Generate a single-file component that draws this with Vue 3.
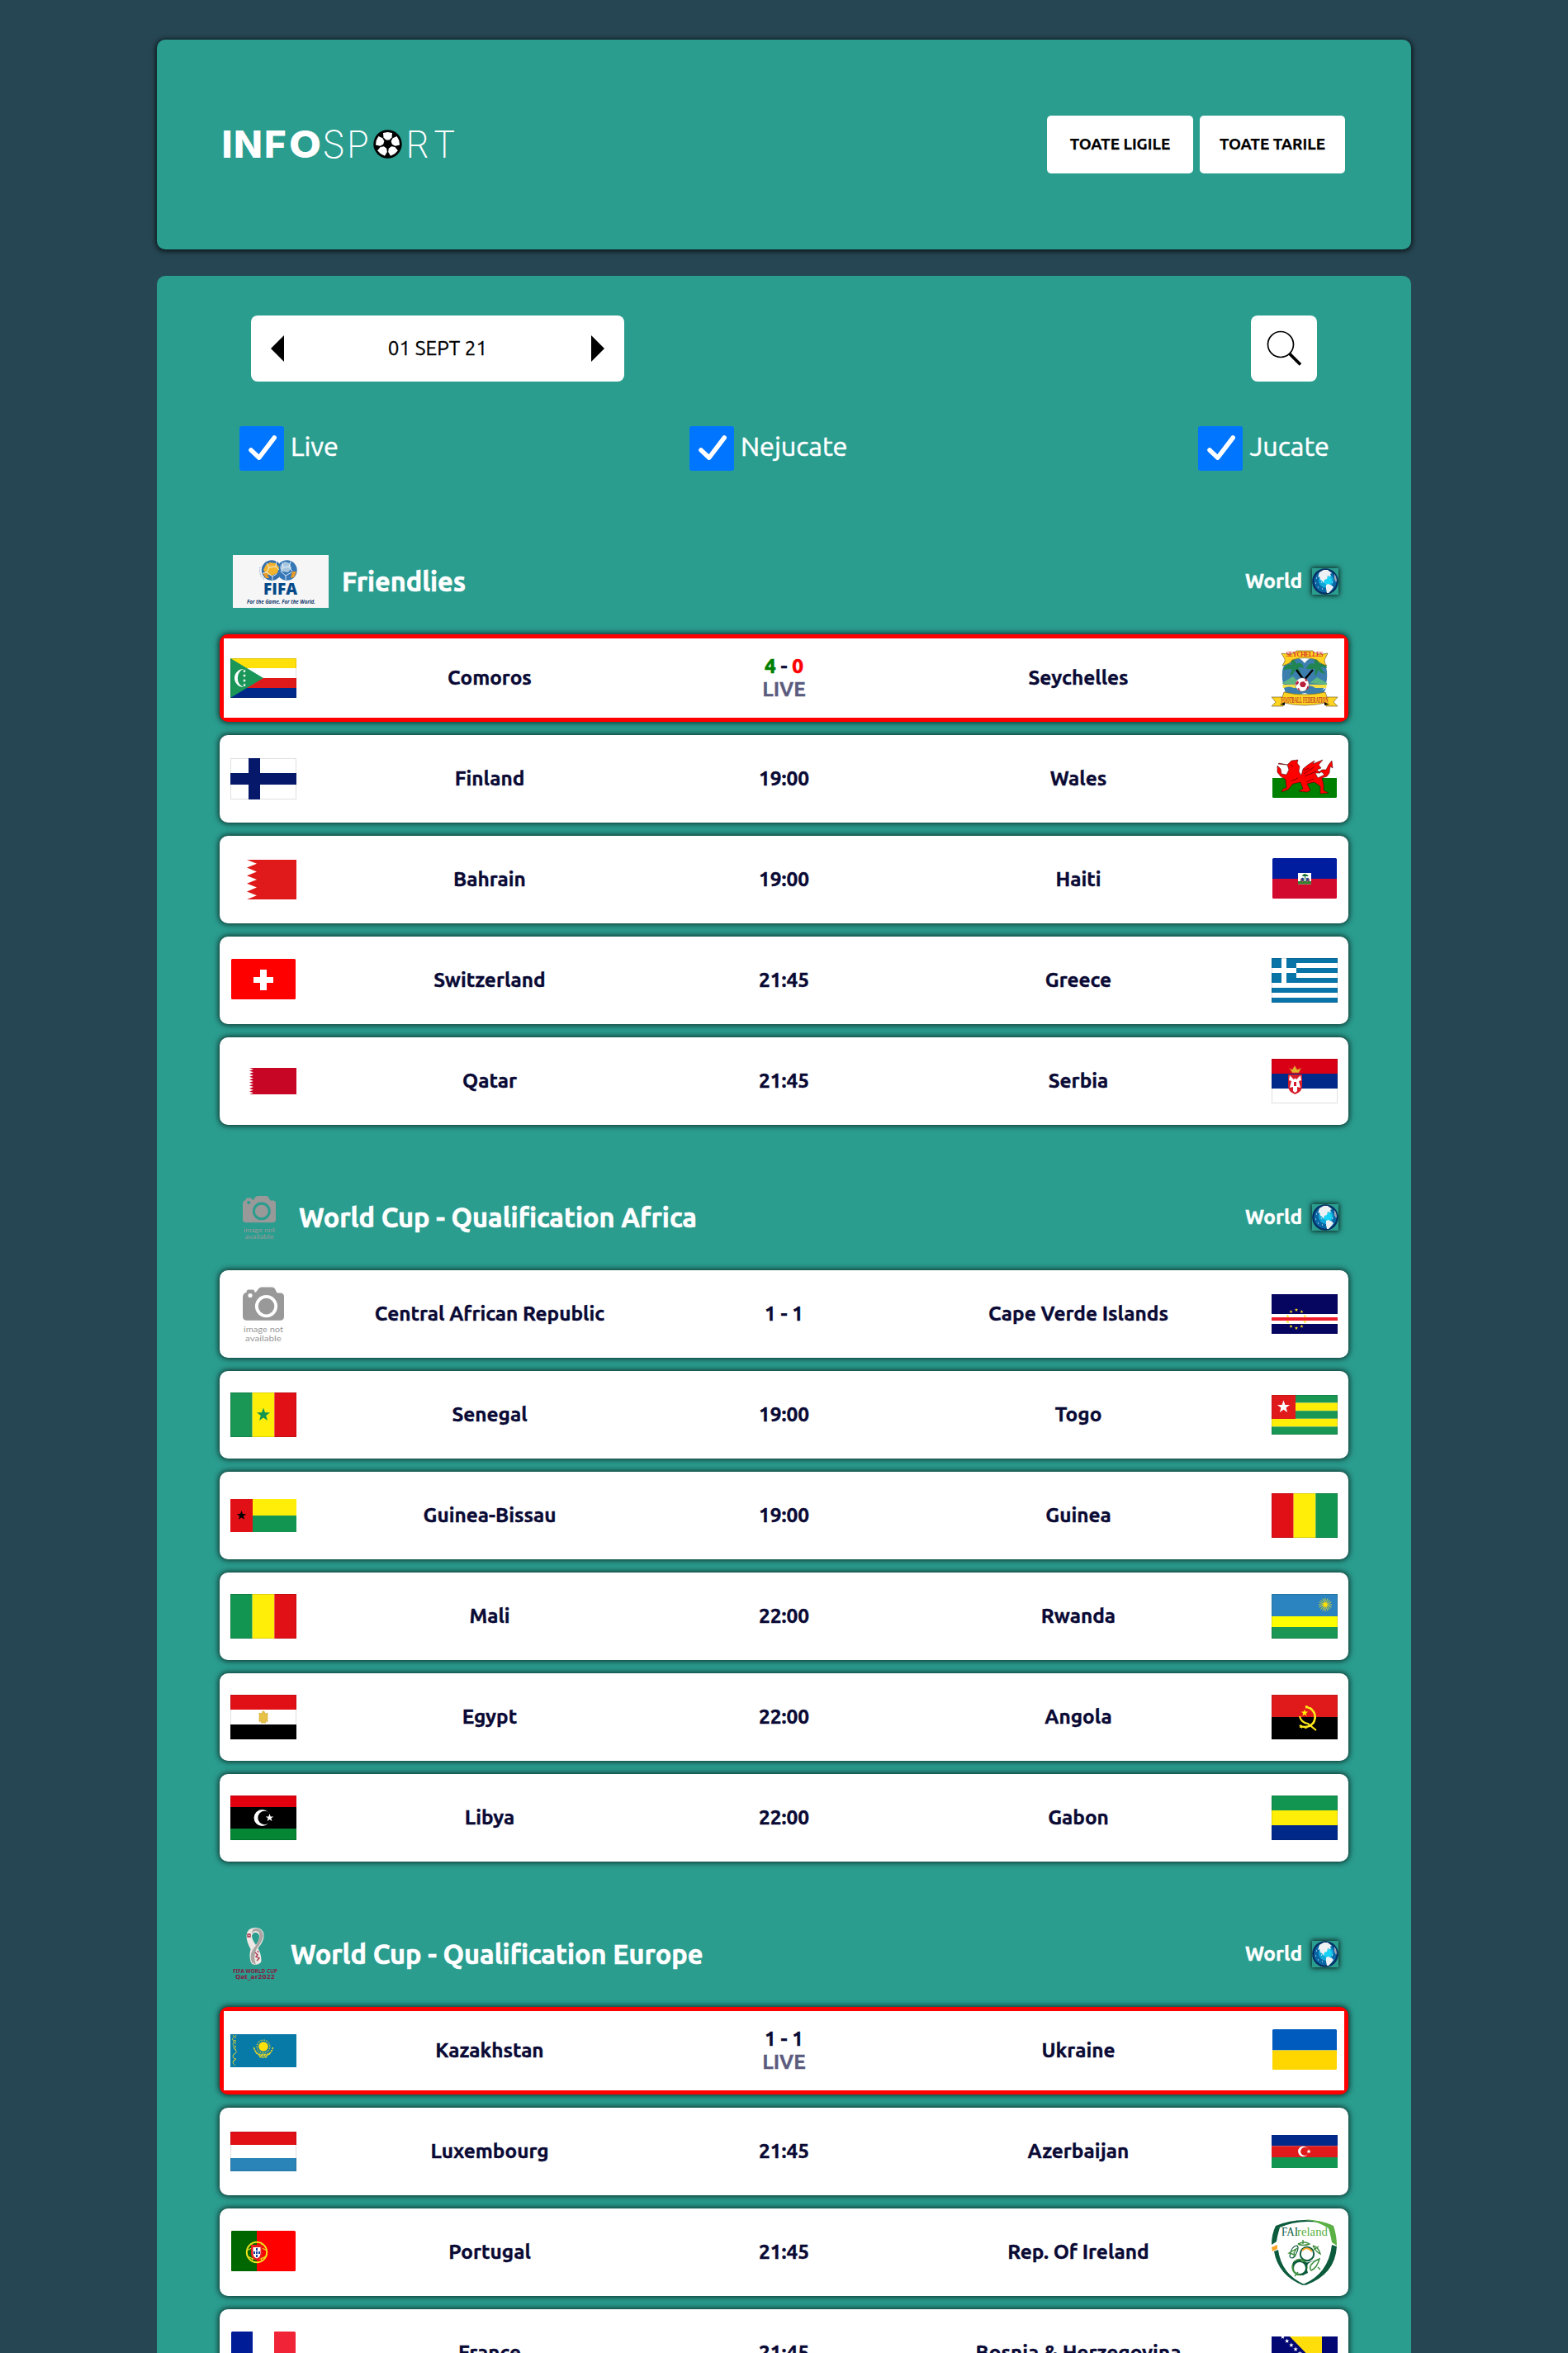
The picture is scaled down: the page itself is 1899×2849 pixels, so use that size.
<script setup>
const star = (cx, cy, r, fill, sy = 1) => {
  const pts = []
  for (let i = 0; i < 10; i++) {
    const q = i % 2 ? r * 0.4 : r
    const a = (Math.PI / 5) * i - Math.PI / 2
    pts.push(`${(cx + q * Math.cos(a)).toFixed(2)},${(cy + q * Math.sin(a) * sy).toFixed(2)}`)
  }
  return `<polygon points="${pts.join(' ')}" fill="${fill}"/>`
}
const rect = (x, y, w, h, fill) => `<rect x="${x}" y="${y}" width="${w}" height="${h}" fill="${fill}"/>`
const bars = (h, colors) => colors.map((c, i) => rect(0, (h / colors.length) * i, 80, h / colors.length, c)).join('')
const cols = (h, colors) => colors.map((c, i) => rect((80 / colors.length) * i, 0, 80 / colors.length, h, c)).join('')
const edge = (h) => `<rect x=".5" y=".5" width="79" height="${h - 1}" fill="none" stroke="#000" stroke-opacity=".12"/>`
const around = (n, f) => Array.from({ length: n }, (_, i) => f((Math.PI * 2 * i) / n, i)).join('')
const f = (h, body) => ({ h, body })

const R = '#e01016', G = '#129550', Y = '#ffef08'

const camera = `<g><path d="M19.500 14q0-3.500 2.500-3.500h5q2 0 2.500 3h1.500l3-4q1.500-2 3.500-2h13q2.500 0 3.500 2l2.500 5h4q4.500 0 4.500 4.500v24q0 4.700-4.500 4.700h-40.500q-5 0-5-4.700v-23q0-5 4-6z" fill="#999"/><circle cx="24" cy="17.500" r="2.600" fill="var(--hole)"/><circle cx="43.500" cy="30.600" r="13.600" fill="var(--hole)"/><circle cx="43.500" cy="30.600" r="9.800" fill="#999"/><g font-size="9" font-weight="400" text-anchor="middle" fill="#999" font-family="Lato,sans-serif"><text x="40" y="62" textLength="48" lengthAdjust="spacingAndGlyphs">image not</text><text x="40" y="73" textLength="44" lengthAdjust="spacingAndGlyphs">available</text></g></g>`

const flags = {
  comoros: f(48, bars(48, ['#ffe00a', '#fff', '#e01a1a', '#00298a']) + '<path d="M0 0L40 24 0 48z" fill="#1a9659"/><path d="M16 13a11 11 0 1 0 0 22a12 12 0 0 1 0-22z" fill="#fff"/>' + [15.5, 21, 27, 32.500].map((y) => star(17, y, 2.200, '#fff')).join('') + edge(48)),
  finland: f(50, rect(0, 0, 80, 50, '#fff') + edge(50) + rect(0, 18, 80, 14, '#05186a') + rect(22, 0, 14, 50, '#05186a')),
  bahrain: f(48, '<path d="M80 0H20L32 4.800 20 9.600 32 14.400 20 19.200 32 24 20 28.800 32 33.600 20 38.400 32 43.200 20 48H80z" fill="#e01a1a"/>'),
  switzerland: f(52, '<rect x="1" width="78" height="49" rx="1.500" fill="#f00"/><path d="M36 13h8v9h8v7h-8v9h-8v-9h-8v-7h8z" fill="#fff"/>'),
  qatar: f(32, '<path d="M80 0H23' + Array.from({ length: 9 }, (_, i) => `L28 ${(i * 3.556 + 1.780).toFixed(2)} 23 ${((i + 1) * 3.556).toFixed(2)}`).join('') + 'H80z" fill="#c70525"/>'),
  wales: f(52, '<path d="M1 25h78v22.500q0 1.500-1.500 1.500h-75q-1.500 0-1.500-1.500z" fill="#008000"/><path d="M8 8l11 1 5-5 8-1-1 4 3 4-1 6 3 5 2-8 6-5 8-5-2 4 12-5-5 6 3 4-5 2 4 4-6 0 3 6 8-4-3-3-4 0 4-3 5 0 3-6 4-5 1 9-3-2-1 8-3 4-6 2 2 8 0 7 6 3-10 1 0-9-7-5-9 2 4 8-4 2-10-1 5-3-3-8-9 2-6 7-8 3 2-4 4-1-1-10-6-4-4-5 0-8 4 4 1 6 6 1 3-6-2-6-10-2z" fill="#f00" stroke="#300" stroke-width=".5"/><path d="M39 16l6-3M39 20l12-8M40 23l14-6M23 9l3 2M24 29l8-4M42 30l9-4" stroke="#600" stroke-width=".8"/>'),
  haiti: f(52, '<path d="M1 1.500q0-1.500 1.500-1.500h75q1.500 0 1.500 1.500V25H1z" fill="#001c9f"/><path d="M1 25h78v22.500q0 1.500-1.500 1.500h-75q-1.500 0-1.500-1.500z" fill="#d20a2e"/>' + rect(32, 18, 16, 13.500, '#fff') + rect(32, 28, 16, 3.500, '#35802e') + '<path d="M38 20l2-1 3 1 2 2-4 0v7h-1v-7l-3 0z" fill="#196b33"/><path d="M35 28q0-5 4-4v4zM46 28q0-5-4-4v4z" fill="#26418f"/><path d="M35 25l3 4M46 25l-3 4" stroke="#d4622c"/>'),
  greece: f(54, bars(54, ['#0874a8', '#fff', '#0874a8', '#fff', '#0874a8', '#fff', '#0874a8', '#fff', '#0874a8']) + rect(0, 0, 30, 30, '#0874a8') + rect(12, 0, 6, 30, '#fff') + rect(0, 12, 30, 6, '#fff') + edge(54)),
  serbia: f(54, bars(54, ['#d90016', '#00298a', '#fff']) + edge(54) + '<path d="M20 19h17v14q0 7-8.500 10Q20 40 20 33z" fill="#d61e2b"/><path d="M27 25l-5-5-1 6 3 1-2 8 4-1 0 5 2.500 2 2.500-2 0-5 4 1-2-8 3-1-1-6-5 5q-1.500-3-3 0z" fill="#fff"/><path d="M27 28h3v5h-3z" fill="#d61e2b"/><path d="M21 11l4 2 3-5 3 5 5-2-3 6h-8z" fill="#e2b429" stroke="#d61e2b" stroke-width=".6"/>'),
  camera: f(80, camera),
  senegal: f(54, cols(54, ['#1a9655', Y, R]) + star(40, 27, 8.500, G) + edge(54)),
  bissau: f(40, rect(0, 0, 80, 20, Y) + rect(0, 20, 80, 20, G) + rect(0, 0, 27, 40, R) + star(13.500, 20, 6, '#000')),
  mali: f(54, cols(54, [G, Y, R]) + edge(54)),
  egypt: f(54, bars(54, [R, '#fff', '#000']) + edge(54) + '<path d="M39 20h2l1 3 3-1v11l-3-2 1 3h-6l1-3-3 2V22l3 1z" fill="#e8c248" stroke="#c89a18" stroke-width=".5"/>'),
  libya: f(54, rect(0, 0, 80, 14, '#e2000f') + rect(0, 14, 80, 26, '#000') + rect(0, 40, 80, 14, '#048634') + '<circle cx="38.500" cy="27" r="10" fill="#fff"/><circle cx="41.500" cy="27" r="8.200" fill="#000"/>' + star(47.500, 27, 5, '#fff') + edge(54)),
  verde: f(48, rect(0, 0, 80, 48, '#060660') + rect(0, 24, 80, 12, '#fff') + rect(0, 28, 80, 4, '#ee1c2a') + around(10, (a) => star(30 + 11 * Math.sin(a), 30 - 11 * Math.cos(a), 2.200, '#ffdf1c'))),
  togo: f(48, bars(48, ['#1a9655', Y, '#1a9655', Y, '#1a9655']) + rect(0, 0, 29, 29, '#e01a1a') + star(14.500, 14.500, 8, '#fff') + edge(48)),
  guinea: f(54, cols(54, [R, Y, G]) + edge(54)),
  rwanda: f(54, rect(0, 0, 80, 27, '#2b84bf') + rect(0, 27, 80, 13, '#ff0') + rect(0, 40, 80, 14, '#1a9655') + around(16, (a) => `<path d="M65 13L${(65 + 8 * Math.cos(a)).toFixed(1)} ${(13 + 8 * Math.sin(a)).toFixed(1)}" stroke="#f1dc1c" stroke-width=".9"/>`) + '<circle cx="65" cy="13" r="3.200" fill="#ffe000" stroke="#2b84bf" stroke-width=".5"/>' + edge(54)),
  angola: f(54, rect(0, 0, 80, 27, '#e01a1a') + rect(0, 27, 80, 27, '#000') + star(40, 22, 4.500, Y) + '<path d="M41 15a12 12 0 1 1-7 22" fill="none" stroke="#ffe81c" stroke-width="2.600"/><path d="M41 14a13 13 0 1 1-8 24" fill="none" stroke="#ffe81c" stroke-width="2" stroke-dasharray="3 3"/><path d="M34 26q2 8 10 9l10 8" fill="none" stroke="#ffe81c" stroke-width="2.200"/>' + edge(54)),
  gabon: f(54, bars(54, [G, Y, '#00298a']) + edge(54)),
  kazakhstan: f(40, rect(0, 0, 80, 40, '#087aa8') + '<path d="M3 1q3 2 0 4t4 3q-4 2-4 4t4 3q-4 1-1 4t0 4q-3 1-3 4t4 3q-4 2-4 4t3 4M7 1q-3 2 0 4M3 8l4 4M3 15l4 4M7 22l-4 4M7 30l-4 4" fill="none" stroke="#d5cc38" stroke-width=".9"/><circle cx="40" cy="15" r="5.800" fill="#ffe00a"/><circle cx="40" cy="15" r="7.800" fill="none" stroke="#e8d723" stroke-width="1.400" stroke-dasharray="1 1.200"/><path d="M28.500 16q2 8 8 8.500h7q6-.5 8-8.500M31 22q4 5 9 3.500 5 1.500 9-3.500M35 27q5 2 10 0" fill="none" stroke="#e8d723" stroke-width="1.600" stroke-dasharray="2.500 .8"/>'),
  luxembourg: f(48, bars(48, [R, '#fff', '#2b84b8']) + edge(48)),
  portugal: f(52, '<rect x="1" width="78" height="49" rx="1.500" fill="#f00"/><path d="M32 0H2.500Q1 0 1 1.500v46Q1 49 2.500 49H32z" fill="#060"/><circle cx="32" cy="26" r="12.200" fill="none" stroke="#f1e51c" stroke-width="2"/><path d="M20 24q12-8 24 0M20 30q12 9 24 0M25 15l14 22M39 15L25 37" fill="none" stroke="#e7dc1c" stroke-width="1.200"/><path d="M25 17h14v10q0 7-7 9-7-2-7-9z" fill="#e51c1c"/><path d="M27.500 20h9v7q0 5-4.500 6.500-4.500-1.500-4.500-6.500z" fill="#fff"/><path d="M31 21h2v3h-2zM31 25h2v3h-2zM31 29h2v3h-2zM28 25h2v3h-2zM34 25h2v3h-2z" fill="#1440a0"/>'),
  france: f(52, '<path d="M27 0H2.500Q1 0 1 1.500v46Q1 49 2.500 49H27z" fill="#001c96"/><path d="M53 0h24.500q1.500 0 1.500 1.500v46q0 1.500-1.500 1.500H53z" fill="#f02436"/>'),
  ukraine: f(52, '<path d="M1 1.500q0-1.500 1.500-1.500h75q1.500 0 1.500 1.500V25.500H1z" fill="#005bbf"/><path d="M1 25.500h78v22q0 1.500-1.500 1.500h-75q-1.500 0-1.500-1.500z" fill="#ffd600"/>'),
  azerbaijan: f(40, rect(0, 0, 80, 13.300, '#00298a') + rect(0, 13.300, 80, 13.700, '#e01a1a') + rect(0, 27, 80, 13, G) + '<circle cx="38.300" cy="20" r="6.200" fill="#fff"/><circle cx="40.200" cy="20" r="5" fill="#e01a1a"/>' + star(45, 20, 2.900, '#fff')),
  bosnia: f(40, rect(0, 0, 80, 40, '#030774') + '<path d="M22 0H61V40z" fill="#ffde0a"/>' + around(8, (a, i) => star(13.500 + i * 5.200, 0.500 + i * 5, 2.900, '#fff'))),
  seychelles: f(68, '<path d="M15 12q6 0 10-4 15-3 30 0 4 4 10 4v28q-1 15-25 19Q16 55 14 40z" fill="#fff"/><path d="M40 16q-6-8-14-6-12 4-13 16-2 22 13 27l14 4 14-4q15-5 13-27-1-12-13-16-8-2-14 6z" fill="#3c7fae"/><path d="M13 40l13-8 9 9H13zM46 40l9-7 12 7v2z" fill="#5db584"/><path d="M13 42q10-1 54 0l-1 4H14z" fill="#f2df43"/><path d="M15 46q6-3 12 0t13-1 13 1 13 0l-3 6-13 6-10-6-10 6-13-6z" fill="#3c7fae"/><path d="M34 55q6-6 12 0l-3 1q-3 2-6 0z" fill="#eef8fc"/><path d="M14 24q4-9 11-6-5-7 2-6 3 2 3 5 7-4 9 5-5-2-7 0l4 6q-6-1-7-5-2 7-7 8l3-8q-7 0-11 1zM42 23q3-9 10-6-2-6 3-6t3 6q8-2 9 5-5-2-8-1l6 8q-7-1-9-6 0 7-4 8l1-8q-8 0-11 0z" fill="#218551"/><path d="M30 24l12 16M50 24L38 38" stroke="#000" stroke-width="2.500"/><path d="M12 4q14 3 18-3h20q4 6 18 3l-4 8q0 5 3 7-10-3-12-7-15-5-30 0-2 5-12 7 4-6 3-8z" fill="#ffd321" stroke="#79652a" stroke-width=".7"/><path d="M0 57h13l2-6q25 6 50 0l2 6h13l-5 6 5 5H66l-1-4q-25 6-50 0l-1 4H0l5-5z" fill="#ffd321" stroke="#79652a" stroke-width=".7"/><path d="M10 66l6-3v4zM70 66l-6-3v4z" fill="#111"/><circle cx="37" cy="42" r="8.300" fill="#fff" stroke="#555" stroke-width=".5"/><path d="M35 39l4-1 3 3-2 4h-4l-2-3zM29 40l3-3 1 3-3 3zM40 34l4 3-3 1zM44 43l1 3-4 3zM33 46l2 4-4-3z" fill="#b8203b"/><text x="40" y="8" font-size="7.500" font-weight="700" font-family="Liberation Serif,serif" text-anchor="middle" textLength="45" fill="#d8352d">SEYCHELLES</text><text x="40" y="63.500" font-size="10" font-weight="700" font-family="Liberation Serif,serif" text-anchor="middle" textLength="57" lengthAdjust="spacingAndGlyphs" fill="#c23726">FOOTBALL FEDERATION</text>'),
  ireland: f(80, '<path d="M5 8Q39-7 75 8q3 12 5 24-2 34-39 48Q3 67 0 33 0 20 5 8z" fill="#fff"/><path d="M5 8Q39-6 75 8 39-3 10 10 7 20 6 27L0 31Q0 18 5 8z" fill="#0c5b3c"/><path d="M40 0Q60 1 75 8q4 12 4 24l-6-4Q71 17 69 11 57 3 40 0z" fill="#5ab043"/><path d="M73 31l6 2Q77 67 41 80L38 79Q69 66 73 31zM3 39l5-2Q12 67 40 79l-2 1Q8 68 3 39z" fill="#0c5b3c"/><path d="M0 34l7-3v5l-6 3z" fill="#faa62b"/><g font-size="14" font-weight="400" font-family="Liberation Serif,serif"><text x="12" y="20" textLength="20" lengthAdjust="spacingAndGlyphs" fill="#0c5b3c">FAI</text><text x="31" y="20" textLength="37" lengthAdjust="spacingAndGlyphs" fill="#5ab043">reland</text></g><circle cx="43" cy="42" r="8.200" fill="#fff" stroke="#0c5b3c" stroke-width="2"/><path d="M37 38q6-6 12 1" fill="none" stroke="#faa62b" stroke-width="2"/><ellipse cx="34" cy="58" rx="8.500" ry="9" fill="#fff" stroke="#3c8f3d" stroke-width="2.500"/><path d="M26 52q-1 14 12 16l6-3q-4-10 3-13l7-3-9 3q-7 1-11-3z" fill="#0c5b3c"/><circle cx="34" cy="59" r="7" fill="#fff"/><path d="M48 62q7-3 10-14-8 3-11 9-1 3 1 5z" fill="#fff" stroke="#3c8f3d" stroke-width="1.500"/><path d="M22 45q2-13 9-13 3 3-3 13-4 4-6 0z" fill="none" stroke="#0c5b3c" stroke-width="1.200"/><path d="M21 41l9-5-3 5 2 4-4-3zM32 30q8-4 14 0-8 3-14 0M38 25v5M50 32q7 2 9 10-5-2-9-10M51 37l6-4M28 69l4-5M56 58l3 3" fill="none" stroke="#3c8f3d" stroke-width="1.400"/>'),
}

const logos = {
  fifa: { w: 116, body: '<rect width="116" height="64" fill="#f6f6f6"/><path d="M33 15q-2 10 6 15" fill="none" stroke="#5584b5" stroke-dasharray="1 1.500"/><circle cx="47" cy="18.500" r="12.200" fill="#356fac"/><circle cx="65.500" cy="18.500" r="12.200" fill="#3577b7"/><path d="M40 12l5-3 7 1 4 5-2 7-7 3-7-2-3-5z" fill="#f3b42c"/><path d="M58 12l5-4 6 2 2 6-4 5-7-1-3-4z" fill="#a8c7de"/><path d="M36 22l5 0 3 6-4 0zM72 20l5 0-3 7-4 1z" fill="#e99b24"/><path d="M41 10l3 5-3 6-5 1M44 15l8-1 4 4M52 14l1-7M41 21l7 5 5-3M48 26v4M60 9l1 6-3 5M61 15l7-1 4 6M68 14l2-6M58 20l6 5 7-4M64 25v5" fill="none" stroke="#edf5ff" stroke-width=".9"/><text x="37" y="47.500" font-family="Open Sans,sans-serif" font-weight="800" font-size="19.500" textLength="41" lengthAdjust="spacingAndGlyphs" fill="#064a8a">FIFA</text><text x="17" y="58.500" font-family="Noto Sans,sans-serif" font-weight="700" font-style="italic" font-size="6.200" textLength="83" lengthAdjust="spacingAndGlyphs" fill="#163c70">For the Game. For the World.</text>' },
  camera: { w: 64, body: `<g transform="scale(.8)">${camera}</g>` },
  qatar: { w: 54, body: '<path d="M27 0q-10 0-10.500 10 0 7 5 16-2 8 0 15 1 4 6 4 7-1 7-5 0-8-4-15 8-10 7-17Q36 0 27 0zm0 6q5 0 5 5 0 4-4 10-5-7-5-11 1-4 4-4z" fill="#eee9e5" fill-rule="evenodd"/><path d="M23 7q3-5 8-2 4 4-2 15l-5 7q-4 7-1 15l5 3q-4-10 1-20 6-7 8-15Q36 1 28 1q-5 0-5 6z" fill="#aaa5a2"/><path d="M18 8h3v3h-3zM27 30l3 3-2 2 4 2-3 3M30 28l1 2" fill="none" stroke="#a72b49" stroke-width="1.300"/><text y="55" font-family="Noto Sans,sans-serif" font-weight="700" font-size="7" textLength="54" lengthAdjust="spacingAndGlyphs" fill="#841d42">FIFA WORLD CUP</text><text x="3" y="62" font-family="DejaVu Sans,sans-serif" font-weight="700" font-size="7" textLength="48" lengthAdjust="spacingAndGlyphs" fill="#841d42">Qat_ar2022</text>' },
}

const m = (home, hf, time, away, af, extra = {}) => ({ home, hf, time, away, af, ...extra })
const groups = [
  { title: 'Friendlies', logo: 'fifa', matches: [
    m('Comoros', 'comoros', '', 'Seychelles', 'seychelles', { live: true, win: '4', lose: '0' }),
    m('Finland', 'finland', '19:00', 'Wales', 'wales'),
    m('Bahrain', 'bahrain', '19:00', 'Haiti', 'haiti'),
    m('Switzerland', 'switzerland', '21:45', 'Greece', 'greece'),
    m('Qatar', 'qatar', '21:45', 'Serbia', 'serbia'),
  ] },
  { title: 'World Cup - Qualification Africa', logo: 'camera', matches: [
    m('Central African Republic', 'camera', '1 - 1', 'Cape Verde Islands', 'verde'),
    m('Senegal', 'senegal', '19:00', 'Togo', 'togo'),
    m('Guinea-Bissau', 'bissau', '19:00', 'Guinea', 'guinea'),
    m('Mali', 'mali', '22:00', 'Rwanda', 'rwanda'),
    m('Egypt', 'egypt', '22:00', 'Angola', 'angola'),
    m('Libya', 'libya', '22:00', 'Gabon', 'gabon'),
  ] },
  { title: 'World Cup - Qualification Europe', logo: 'qatar', matches: [
    m('Kazakhstan', 'kazakhstan', '1 - 1', 'Ukraine', 'ukraine', { live: true }),
    m('Luxembourg', 'luxembourg', '21:45', 'Azerbaijan', 'azerbaijan'),
    m('Portugal', 'portugal', '21:45', 'Rep. Of Ireland', 'ireland'),
    m('France', 'france', '21:45', 'Bosnia & Herzegovina', 'bosnia'),
  ] },
]
const filters = ['Live', 'Nejucate', 'Jucate']
const petals = [0, 72, 144, 216, 288]
</script>

<template>
  <div class="page">
    <header class="card top">
      <svg class="brand" width="284" height="60" viewBox="0 -10 284 60" role="img" aria-label="InfoSport">
        <g class="strong">
          <text x="-0.500" y="36">I</text>
          <text x="14" y="36">N</text>
          <text x="51" y="36">F</text>
          <text x="81" y="36" textLength="39" lengthAdjust="spacingAndGlyphs">O</text>
        </g>
        <g class="thin">
          <text x="121" y="36">S</text>
          <text x="150.500" y="36">P</text>
          <text x="222" y="36">R</text>
          <text x="255" y="36">T</text>
        </g>
        <g transform="translate(200.500 19.500)">
          <circle r="17.200" />
          <path v-for="a in petals" :key="a" d="M-5.500-13.500L0-14.500 5.500-13.500 5-8 2-5H-2L-5-8z" fill="#fff" :transform="`rotate(${a})`" />
        </g>
      </svg>
      <nav class="nav">
        <a class="ligi">TOATE LIGILE</a>
        <a class="tari">TOATE TARILE</a>
      </nav>
    </header>

    <main class="card body">
      <div class="tools">
        <div class="date">
          <svg width="16" height="32" viewBox="0 0 16 32"><path d="M16 0V32L0 16z" /></svg>
          <span>01 SEPT 21</span>
          <svg width="16" height="32" viewBox="0 0 16 32"><path d="M0 0V32L16 16z" /></svg>
        </div>
        <button class="search" aria-label="Search">
          <svg width="80" height="80" viewBox="0 0 80 80"><circle cx="36" cy="35" r="15.500" fill="none" stroke="#000" stroke-width="1.700" /><path d="M46.500 46L60 59.500" stroke="#000" stroke-width="3.700" /></svg>
        </button>
      </div>

      <div class="filters">
        <label v-for="t in filters" :key="t">
          <svg width="54" height="54" viewBox="0 0 54 54"><rect width="54" height="54" rx="3" fill="#0075ff" /><path d="M14 29l9.800 9.200L42.200 14" fill="none" stroke="#fff" stroke-width="5.500" stroke-linecap="round" stroke-linejoin="round" /></svg>
          <span>{{ t }}</span>
        </label>
      </div>

      <section v-for="g in groups" :key="g.title" class="group">
        <div class="head">
          <svg class="logo" :width="logos[g.logo].w" height="64" :viewBox="`0 0 ${logos[g.logo].w} 64`" v-html="logos[g.logo].body"></svg>
          <h2>{{ g.title }}</h2>
          <strong class="world">World</strong>
          <svg class="globe" width="32" height="32" viewBox="0 0 32 32">
            <circle cx="16" cy="16" r="15.800" fill="#062f63" />
            <circle cx="16" cy="16" r="13.500" fill="#0a67a5" />
            <circle cx="17" cy="15" r="9" fill="#12a8d8" />
            <circle cx="19" cy="15" r="5" fill="#18d3f5" />
            <path d="M9 5l5-3 5 0 5 4-2 1 1 3-4-1-1 4-3 1-1 4-2-3-2-1-1-4-2 1zM17 20l3-1 4 2 2 2-3 4-3 3-2 0-1-5z" fill="#eef1f4" />
            <path d="M27 7l2 3 1 5-1 2-2-4z" fill="#9fa9b5" />
            <path d="M5 12h1M7 23h1M12 25h1M24 17h1M20 10h1M4 18h1M11 17h1" stroke="#fff" stroke-width="1.200" />
          </svg>
        </div>
        <div class="matches">
          <article v-for="r in g.matches" :key="r.home" class="match" :class="{ live: r.live }">
            <div class="inner">
              <svg width="80" :height="flags[r.hf].h" :viewBox="`0 0 80 ${flags[r.hf].h}`" v-html="flags[r.hf].body"></svg>
              <span class="name">{{ r.home }}</span>
              <span class="score">
                <span v-if="r.win"><b class="win">{{ r.win }}</b> - <b class="lose">{{ r.lose }}</b></span>
                <span v-else>{{ r.time }}</span>
                <span v-if="r.live" class="tag">LIVE</span>
              </span>
              <span class="name">{{ r.away }}</span>
              <svg width="80" :height="flags[r.af].h" :viewBox="`0 0 80 ${flags[r.af].h}`" v-html="flags[r.af].body"></svg>
            </div>
          </article>
        </div>
      </section>
    </main>
  </div>
</template>

<style>
body { background: #264653; overflow: hidden; }
</style>

<style scoped>
.page {
  box-sizing: border-box;
  height: 2849px;
  overflow: hidden;
  padding: 48px 190px 0;
  background: #264653;
  font-family: Ubuntu, "Noto Sans", sans-serif;
}
svg { overflow: visible; }
.card { border-radius: 10px; background: #2a9d8f; }
.top {
  display: flex;
  align-items: center;
  justify-content: space-between;
  box-sizing: border-box;
  height: 254px;
  padding: 0 80px 0 79px;
  box-shadow: 0 1px 6px 1px rgba(0, 0, 0, .8);
}
.brand { display: block; margin-bottom: 1px; }
.brand text { font-family: Inter, sans-serif; font-size: 45.5px; fill: #fff; }
.strong text { font-weight: 800; }
.thin text { font-weight: 200; }
.nav { display: flex; gap: 8px; }
.nav a {
  width: 177px;
  height: 70px;
  border-radius: 5px;
  background: #fff;
  color: #000;
  font-size: 19px;
  font-weight: 700;
  line-height: 69px;
  text-align: center;
  -webkit-text-stroke: .25px currentColor;
}
.nav .tari { width: 176px; }
.body { margin-top: 32px; padding: 48px 76px 0; height: 2600px; box-sizing: border-box; }
.tools { display: flex; justify-content: space-between; padding: 0 38px; }
.date {
  display: flex;
  align-items: center;
  justify-content: space-between;
  box-sizing: border-box;
  width: 452px;
  height: 80px;
  padding: 0 24px;
  border-radius: 8px;
  background: #fff;
  color: #000;
  font-size: 24.3px;
}
.date span { padding-bottom: 2px; -webkit-text-stroke: .3px currentColor; }
.search { width: 80px; height: 80px; padding: 0; border: 0; border-radius: 8px; background: #fff; }
.search svg, .date svg { display: block; }
.filters { display: flex; justify-content: space-between; margin-top: 54px; padding: 0 23px 0 24px; color: #fff; }
.filters label { display: flex; align-items: center; gap: 8px; height: 54px; font-size: 32.4px; line-height: 48px; }
.filters span { padding-bottom: 6px; -webkit-text-stroke: .5px currentColor; }
.group { margin-top: 80px; }
.filters + .group { margin-top: 102px; }
.head { display: flex; align-items: center; height: 64px; padding: 0 12px 0 16px; color: #fff; }
.logo { --hole: #2a9d8f; }
h2 {
  flex: 1;
  margin: 0 0 0 16px;
  padding-top: 1px;
  font-size: 32.5px;
  line-height: 63px;
  white-space: nowrap;
  -webkit-text-stroke: .6px currentColor;
}
.world { font-size: 24.4px; line-height: 62px; padding-bottom: 2px; -webkit-text-stroke: .45px currentColor; }
.globe { margin-left: 12px; box-shadow: 0 0 6px 1px rgba(0, 0, 0, .8); }
.matches { display: flex; flex-direction: column; gap: 16px; margin-top: 32px; }
.match {
  box-sizing: border-box;
  height: 106px;
  padding: 5px;
  border-radius: 10px;
  background: #fff;
  box-shadow: 0 0 7px 1px rgba(0, 0, 0, .75);
  --hole: #fff;
}
.match.live { background: #f00; }
.inner {
  display: grid;
  grid-template-columns: 80px 468px 1fr 468px 80px;
  align-items: center;
  height: 96px;
  padding: 0 8px;
  background: #fff;
  color: #0a0a35;
  font-size: 24.4px;
  font-weight: 700;
  line-height: 28px;
  text-align: center;
}
.inner svg { display: block; }
.name, .score { padding-bottom: 3px; -webkit-text-stroke: .4px currentColor; }
.score { display: flex; flex-direction: column; }
.win { color: #008000; }
.lose { color: #f00; }
.win, .lose, .tag { -webkit-text-stroke-color: currentColor; }
.tag { color: #5b5b7e; }
</style>
